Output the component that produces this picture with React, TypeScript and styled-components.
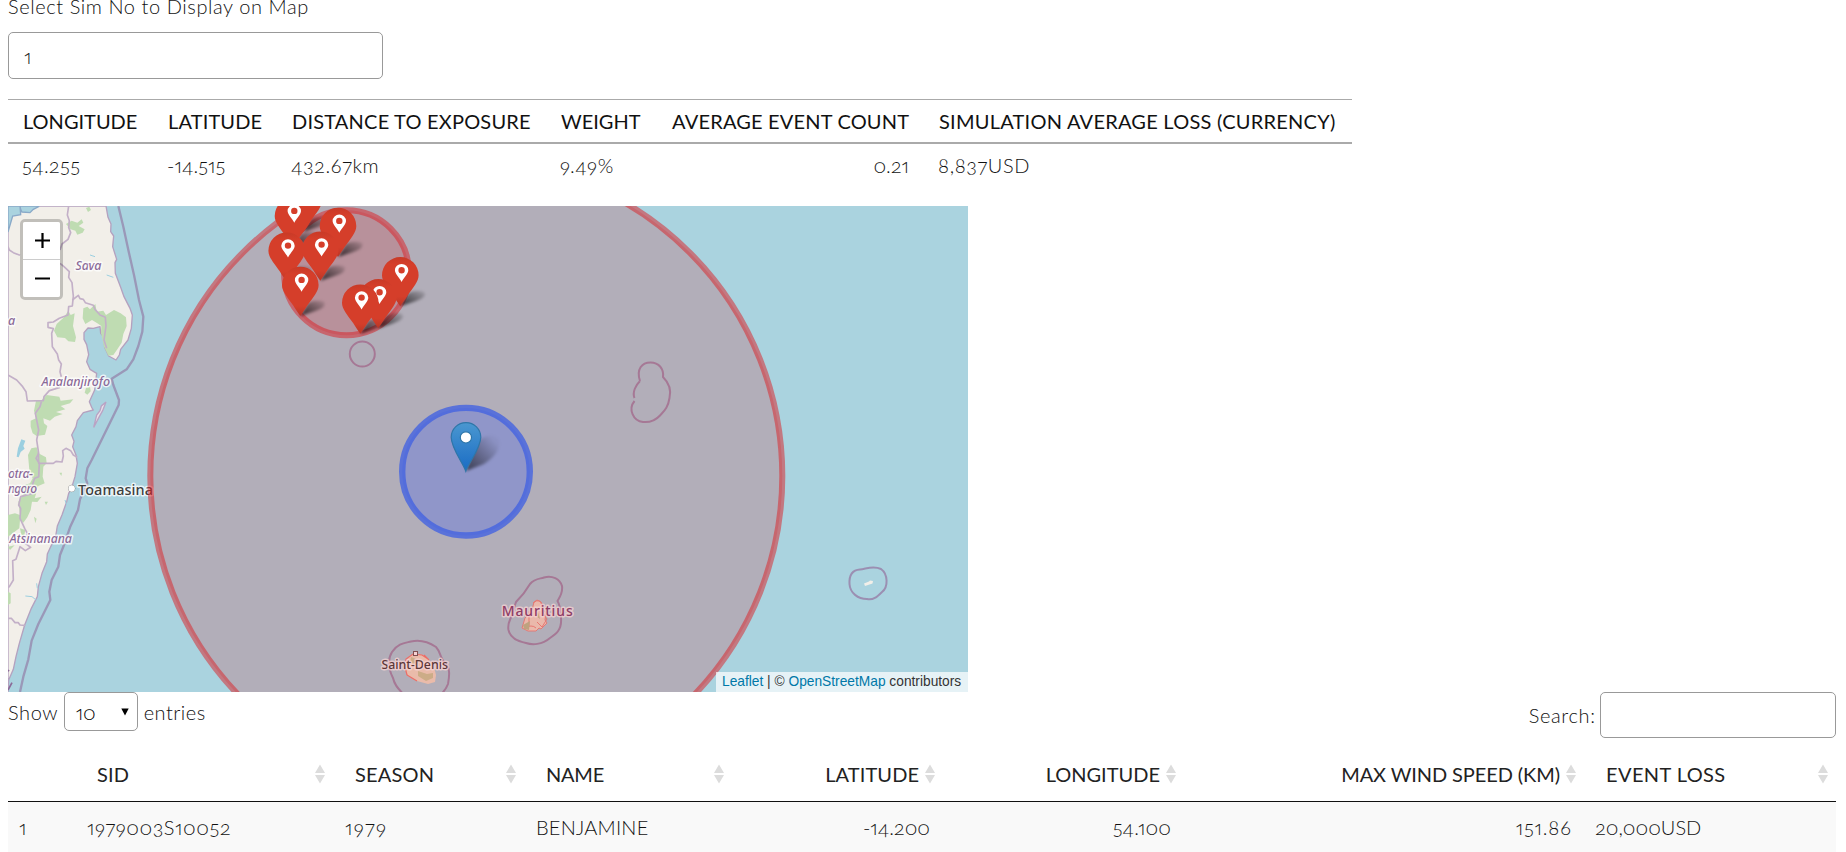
import React from 'react';
import styled, { createGlobalStyle } from 'styled-components';

const GlobalStyle = createGlobalStyle`
  * { box-sizing: border-box; }
  html, body { margin: 0; height: 852px; overflow: hidden; background: #fff; }
  body {
    font-family: Lato, "Open Sans", sans-serif;
    font-size: 20px;
    font-weight: 300;
    line-height: 24px;
    color: #111;
    font-variant-numeric: oldstyle-nums proportional-nums;
  }
`;

const Page = styled.main`
  display: flex;
  flex-direction: column;
  align-items: flex-start;
  width: 1846px;
  height: 852px;
  padding: 0 10px 0 8px;
  overflow: hidden;
  > * { flex: none; }
`;

const Tracked = styled.span<{ $track: number }>`
  letter-spacing: ${p => p.$track}px;
  margin-right: ${p => -p.$track}px;
  white-space: nowrap;
`;

const FieldLabel = styled.label`
  height: 24px;
  margin: -6px 0 14px;
  letter-spacing: 0.58px;
`;

const SimInput = styled.div`
  display: flex;
  align-items: center;
  width: 375px;
  height: 47px;
  padding: 0 15px;
  border: 1px solid #999;
  border-radius: 5px;
`;

const SummaryTable = styled.table`
  width: 1344px;
  margin-top: 20px;
  table-layout: fixed;
  border-collapse: separate;
  border-spacing: 0;
  border-top: 1px solid #aaa;
`;

const Col = styled.col<{ $w: number }>`
  width: ${p => p.$w}px;
`;

const SummaryHead = styled.th<{ $right?: boolean }>`
  height: 44px;
  padding: 0 15px;
  border-bottom: 2px solid #aaa;
  color: #111;
  font-weight: 400;
  text-align: ${p => (p.$right ? 'right' : 'left')};
  white-space: nowrap;
`;

const SummaryCell = styled.td<{ $right?: boolean }>`
  height: 43px;
  padding: 0 15px 1px 14px;
  text-align: ${p => (p.$right ? 'right' : 'left')};
  white-space: nowrap;
`;

const MapFrame = styled.section`
  position: relative;
  width: 960px;
  height: 486px;
  margin-top: 19px;
  overflow: hidden;
  background: #aad3df;
`;

const MapCanvas = styled.svg`
  display: block;
`;

const ZoomControl = styled.div`
  position: absolute;
  top: 13px;
  left: 12px;
  width: 43px;
  border: 3px solid rgba(0, 0, 0, 0.2);
  border-radius: 5px;
  background-clip: padding-box;
`;

const ZoomButton = styled.button`
  display: flex;
  align-items: center;
  justify-content: center;
  width: 37px;
  height: 37px;
  padding: 0 0 0 2px;
  border: 0;
  background: #fff;
  &:first-child { height: 38px; border-bottom: 1px solid #ccc; border-radius: 2px 2px 0 0; }
  &:last-child { border-radius: 0 0 2px 2px; }
`;

const Attribution = styled.div`
  position: absolute;
  right: 0;
  bottom: 0;
  width: 252px;
  height: 20px;
  padding-left: 6px;
  background: rgba(255, 255, 255, 0.7);
  color: #333;
  font: 13.75px/19px "Liberation Sans", Arial, sans-serif;
  white-space: nowrap;
`;

const MapLink = styled.a`
  color: #0078a8;
`;

const Controls = styled.div`
  display: flex;
  justify-content: space-between;
  align-items: flex-start;
  width: 1828px;
  height: 57px;
`;

const LengthControl = styled.div`
  display: flex;
  align-items: center;
  height: 39px;
  gap: 6px;
`;

const LengthSelect = styled.div`
  display: flex;
  align-items: center;
  justify-content: space-between;
  width: 74px;
  height: 39px;
  padding: 0 8px 0 11px;
  border: 1px solid #999;
  border-radius: 5px;
  color: #000;
`;

const SearchControl = styled.div`
  display: flex;
  align-items: center;
  height: 46px;
  gap: 5px;
`;

const SearchInput = styled.input`
  width: 236px;
  height: 46px;
  border: 1px solid #999;
  border-radius: 5px;
`;

const EventTable = styled.table`
  width: 1828px;
  table-layout: fixed;
  border-collapse: separate;
  border-spacing: 0;
`;

const EventHead = styled.th`
  height: 53px;
  padding: 0 10px 3px 20px;
  border-bottom: 1px solid #111;
  color: #222;
  font-weight: 400;
  &:last-child { padding-left: 25px; padding-right: 8px; }
`;

const HeadContent = styled.div<{ $right?: boolean }>`
  display: flex;
  align-items: center;
  justify-content: ${p => (p.$right ? 'flex-end' : 'space-between')};
  gap: 6px;
  margin-right: ${p => (p.$right ? -5 : 0)}px;
`;

const EventCell = styled.td<{ $right?: boolean }>`
  height: 54px;
  padding: 0 10px 4px;
  background: #f9f9f9;
  text-align: ${p => (p.$right ? 'right' : 'left')};
  white-space: nowrap;
  &:first-child { padding-left: 11px; }
  &:last-child { padding-left: 14px; }
`;

const summary = [
  { w: 145, head: 'LONGITUDE', ht: 0, cell: '54.255', ct: 0.3 },
  { w: 124, head: 'LATITUDE', ht: 0.15, cell: '-14.515', ct: 0.1 },
  { w: 269, head: 'DISTANCE TO EXPOSURE', ht: 0.2, cell: '432.67km', ct: 0.6 },
  { w: 110, head: 'WEIGHT', ht: 0, cell: '9.49%', ct: 0.6 },
  { w: 268, head: 'AVERAGE EVENT COUNT', ht: 0.18, cell: '0.21', ct: 0, right: true },
  { w: 428, head: 'SIMULATION AVERAGE LOSS (CURRENCY)', ht: 0.24, cell: '8,837USD', ct: 0.65 },
];

const events = [
  { w: 258, head: 'SID', ht: 0.2, cell: '1979003S10052', ct: 0.55 },
  { w: 191, head: 'SEASON', ht: 0.18, cell: '1979', ct: 1.3 },
  { w: 208, head: 'NAME', ht: -0.25, cell: 'BENJAMINE', ct: 0.2 },
  { w: 206, head: 'LATITUDE', ht: 0.1, cell: '-14.200', ct: 0, right: true },
  { w: 241, head: 'LONGITUDE', ht: 0, cell: '54.100', ct: 0.1, right: true },
  { w: 400, head: 'MAX WIND SPEED (KM)', ht: -0.1, cell: '151.86', ct: 0.9, right: true },
  { w: 255, head: 'EVENT LOSS', ht: 0.4, cell: '20,000USD', ct: 0 },
];

const SortIcon = () => (
  <svg width="10" height="20" viewBox="0 0 10 20" fill="#dcdcdc">
    <path d="M5 0.5 L10 9 H0 Z M0 11 H10 L5 19.5 Z" />
  </svg>
);

const pins = [
  [303.5, 231.7], [293, 247], [338, 257], [286.7, 281.7], [320.3, 280.7],
  [300.3, 316], [400.3, 306.3], [378.3, 328.3], [360.3, 333.7],
];

const RedPin = ({ x, y }: { x: number; y: number }) => (
  <g transform={`translate(${x} ${y})`}>
    <path d="M0 0 C-2 -3 -4.5 -6.5 -7 -10.5 C-13 -19 -18.3 -24.5 -18.3 -31 A18.3 18.3 0 0 1 18.3 -31 C18.3 -24.5 13 -19 7 -10.5 C4.5 -6.5 2 -3 0 0Z" fill="url(#pinRed)" />
    <path fillRule="evenodd" d="M1.3 -24.3 C-0.5 -28 -5.4 -32.5 -5.4 -36 A6.7 6.4 0 0 1 8 -36 C8 -32.5 3.1 -28 1.3 -24.3Z M1.3 -39.3 A3.2 3.2 0 1 0 1.3 -32.9 A3.2 3.2 0 1 0 1.3 -39.3Z" fill="#fff" />
  </g>
);

const ParkAreas = () => (
  <g fill="#bfdcb2">
    <path d="M198 72 L215 62 L232 68 L245 58 L250 68 L236 78 L254 88 L248 98 L232 104 L226 92 L212 88 Z M258 24 L268 20 L273 30 L264 36Z" />
    <path d="M205 332 L212 345 L224 340 L219 378 L228 412 L225 426 L205 424 L195 414 L172 412 L162 392 L170 372 L192 352 Z" />
    <path d="M250 325 L262 320 L270 328 L286 312 L290 335 L310 332 L318 345 L342 330 L362 340 L378 352 L380 378 L370 402 L365 428 L352 448 L340 465 L325 467 L312 440 L303 398 L304 378 L292 370 L276 360 L256 372 L248 355Z" />
    <path d="M108 602 L125 600 L140 585 L178 590 L182 602 L220 598 L210 610 L182 618 L196 628 L168 636 L188 642 L164 650 L150 662 L130 655 L132 670 L142 678 L135 704 L110 708 L98 700 L92 680 L92 662 L108 655 L102 632Z" />
    <path d="M258 564 L270 560 L272 574 L262 584 L254 578Z" />
    <path d="M94 745 L110 742 L115 760 L138 772 L140 790 L130 800 L128 830 L134 850 L115 858 L110 875 L104 895 L125 890 L112 906 L96 905 L92 930 L82 952 L70 968 L60 960 L58 985 L38 1000 L24 1010 L24 945 L45 940 L60 945 L55 905 L72 880 L60 860 L90 850 L98 835 L88 810 L84 765Z" />
    <path d="M102 950 L110 956 L106 970Z M134 905 L144 905 L138 915Z M178 818 L186 818 L184 828Z M60 985 L76 990 L72 1010 L64 1005Z M24 1175 L32 1180 L32 1210 L24 1215Z M24 1040 L44 1036 L30 1050Z" />
  </g>
);

const AdminBorders = () => (
  <g fill="none" stroke="#c3b0c8" strokeWidth="5" strokeLinejoin="round">
    <path d="M206 18 L202 45 L208 62 L206 82 L212 98 L204 118 L186 132 L180 150" />
    <path d="M24 140 L28 150 L40 158 L60 166 M180 190 L192 200 L208 215 L206 232 L216 248 L218 270 L220 288 L217 318 L206 320 L204 345 L178 355 L160 366 L144 368 L144 382 L160 386 L155 400 L157 440 L172 462 L176 480 L184 492 L180 515 L184 530" />
    <path d="M217 300 L235 286 L240 296 L250 298 L256 308 L280 316 L285 328 L300 345 L316 352 L318 378 L312 420 L320 445" />
    <path d="M24 525 L50 540 L68 560 L78 575 L82 603 L130 602 L132 590 L148 572 L180 562 M125 602 L120 620 L106 640 L116 690 L110 720 L116 760 L108 775 L118 790" />
    <path d="M115 760 L116 790 L160 790 L168 784 L186 786 L190 768 L188 752 L198 745 L212 752 L220 765 L232 772" />
    <path d="M118 790 L116 830 L104 835 L96 858 L98 880 L62 890 L56 915 L62 925 L60 955 L74 985 L82 1000 L76 1030 L92 1042 L76 1052 L60 1040 L48 1078 L38 1082 L40 1140 L28 1160 L24 1162 M24 1255 L34 1255 L45 1268 L55 1268 L60 1275 L76 1276" />
  </g>
);

const Mainland = () => (
  <g transform="translate(0 200) scale(0.33333)">
    <path
      d="M24 18 L318 18 L324 52 L333 72 L332 95 L341 108 L338 140 L350 178 L345 188 L346 220 L362 262 L372 290 L390 325 L397 345 L394 385 L384 420 L362 448 L358 465 L348 480 L326 468 L314 442 L312 412 L302 400 L300 380 L280 385 L264 384 L252 398 L252 418 L260 434 L266 464 L260 485 L270 508 L290 520 L284 570 L268 605 L275 622 L280 630 L250 638 L232 662 L228 680 L215 705 L222 724 L218 740 L228 765 L232 790 L225 830 L214 866 L206 880 L200 905 L186 945 L172 978 L166 1015 L152 1040 L142 1062 L140 1085 L126 1120 L115 1160 L112 1190 L94 1225 L74 1275 L58 1330 L48 1370 L40 1408 L26 1440 L24 1476 Z"
      fill="#f2efe9" stroke="#b4a1bf" strokeWidth="4" strokeLinejoin="round"
    />
    <ParkAreas />
    <AdminBorders />
    <path d="M24 18 L60 18 L62 28 L66 36 L90 38 L100 28 L116 20 L116 18 L60 18 L62 44 L38 48 L24 96 Z" fill="#aad3df" stroke="#8aa9c8" strokeWidth="4" />
    <path d="M64 718 L76 722 L70 738 L74 746 L62 756 L56 772 L50 770 L54 745Z" fill="#9bcfe0" />
    <path d="M318 606 L308 632 L298 650 L281 682 L290 645 L300 632 L304 618Z" fill="#e8e0e8" stroke="#b9a3c4" strokeWidth="4" />
    <path d="M110 1150 L112 1165 M76 1188 L96 1190 L108 1200 M195 900 L200 915 M320 225 L340 232 M270 165 L285 170" stroke="#9bcfe0" strokeWidth="3" fill="none" />
    <path
      d="M355 18 L370 80 L385 150 L402 225 L417 300 L430 350 L427 395 L415 438 L400 478 L380 508 L335 536 L340 555 L357 600 L356 615 L275 780 L262 805 L257 835 L262 850 L250 875 L240 898 L234 930 L210 982 L192 1035 L180 1065 L175 1100 L155 1140 L148 1175 L151 1200 L115 1272 L95 1322 L85 1378 L70 1430 L60 1476"
      fill="none" stroke="#9a98b8" strokeWidth="7" strokeLinejoin="round"
    />
    <path d="M24 1470 L36 1448 M24 1410 L27 1414" stroke="#8b6a98" strokeWidth="5" />
  </g>
);

const Islands = () => (
  <g fill="none" stroke="#9b8fb2" strokeWidth="2" strokeLinejoin="round">
    <circle cx="362.3" cy="354" r="12.5" />
    <path d="M640 381 C636 369 642 362.5 650.5 362.5 C659 362.5 664 369 663 377 C671 385 671 392 669.5 398 C668 408 664 411 660 415.5 C655 421 648 422.5 643 422 C633 421 628 409 634.5 401 M634.5 398 C632 392 636 385 640 381" />
    <path d="M860 569.5 C866 569 873 565 881 569 C888 574 888.5 587 882 592 C877 597 873 600.5 867 599 C858 599 850 593 849.5 584 C849 575 853 570 860 569.5Z" />
    <path d="M864 583.5 L869 581.5 L870 580.5 L873 581 L872.5 583.5 L868 585 L865 586Z" fill="#f2efe9" stroke="none" />
    <path d="M516 602 C522 596 526 591 530 584 C535 578 540 579 544 577.5 C552 575 560 579 562 586 C563 593 560 597 557.5 601 C561 607 560 612 561 618 C562 630 556 634 550 638 C542 645 532 645 526 643 C516 641 510 637 508.5 630 C507 622 511 620 512 614 C514 608 515 605 516 602Z" />
    <path d="M392 652 C398 643 405 643 411 641.5 C422 639 430 643 436 647 C441 652 440 659 445 663 C451 668 449 678 448 684 C445 692 442 693 438 697 L406 697 C400 690 395 687 393 678 C388 668 387 660 392 652Z" />
  </g>
);

const IslandLand = () => (
  <g>
    <path d="M537 600 L541 602 L542 608 L546 613 L545 620 L547 623 L541 629 L539 628 L536 631 L528 631 L522 628 L525 618 L532 610 L534 602Z" fill="#f0dfce" stroke="#e7908a" strokeWidth="1" />
    <path d="M533 603 Q540 597 543 606 Q542 614 547 619 L542 627 L537 622 M529 611 L529 626 M524 628 Q532 624 536 628" fill="none" stroke="#ee8e85" strokeWidth="1" />
    <path d="M523 625 L530 621 L529 630 L524 629Z M535 615 L538 612 L540 619Z" fill="#b9c497" />
    <path d="M413 654 L424 655 L429 660 L434 667 L436 675 L435 682 L428 684 L417 681 L408 676 L405 669 L406 660Z" fill="#f0e3cc" />
    <path d="M411 657 L419 660 L417 665 L410 663Z M418 671 L427 674 L433 673 L433 678 L426 681 L418 676Z" fill="#cbd0a0" />
    <path d="M424 655 L429 660 M407 675 L405 667 L406 659 L413 654 L422 655 L428 659 M407 675 L417 681" fill="none" stroke="#f58078" strokeWidth="1.2" />
    <rect x="413.5" y="651.5" width="4" height="4" fill="#fff" stroke="#6d5c5c" />
  </g>
);

const MapLabels = () => (
  <g fontFamily='"Noto Sans", "Open Sans", sans-serif' stroke="rgba(255,255,255,.75)" strokeWidth="3" strokeLinejoin="round" paintOrder="stroke">
    <g fontSize="12.5" fontStyle="italic" fontWeight="500" fill="#8b6a98">
      <text x="75.5" y="270" textLength="26">Sava</text>
      <text x="41.5" y="386" textLength="68.5">Analanjirofo</text>
      <text x="8" y="325">a</text>
      <text x="8" y="478" textLength="25">otra-</text>
      <text x="8" y="493" fontSize="12" textLength="29">ngoro</text>
      <text x="9.5" y="543" textLength="62.5">Atsinanana</text>
    </g>
    <g fill="#3f3f3f">
      <circle cx="71.7" cy="488.5" r="3.2" fill="#fff" stroke="#777" strokeWidth="1" />
      <text x="78" y="494.5" fontSize="14.5" fontWeight="500" textLength="75">Toamasina</text>
      <text x="381.5" y="668.5" fontSize="12.5" fontWeight="500" textLength="66.5">Saint-Denis</text>
    </g>
    <text x="501.7" y="616" fontSize="14" fontWeight="500" textLength="71" fill="#7d4576">Mauritius</text>
  </g>
);

const TerritoryMap = () => (
  <MapCanvas width="960" height="486" viewBox="8 206 960 486">
    <defs>
      <linearGradient id="pinRed" x1="0" y1="0" x2="0" y2="1">
        <stop offset="0" stopColor="#c83a27" />
        <stop offset="0.15" stopColor="#d53e2a" />
        <stop offset="0.8" stopColor="#d53e2a" />
        <stop offset="1" stopColor="#b83626" />
      </linearGradient>
      <linearGradient id="pinBlue" x1="0" y1="0" x2="0" y2="1">
        <stop offset="0" stopColor="#4a97d0" />
        <stop offset="1" stopColor="#1a6cc4" />
      </linearGradient>
      <filter id="soft" x="-40%" y="-40%" width="180%" height="180%">
        <feGaussianBlur stdDeviation="1.8" />
      </filter>
      <linearGradient id="fade" x1="0" y1="1" x2="1" y2="0">
        <stop offset="0" stopColor="#000" stopOpacity="0.75" />
        <stop offset="1" stopColor="#000" stopOpacity="0.08" />
      </linearGradient>
      <linearGradient id="fadeLight" x1="0" y1="1" x2="1" y2="0">
        <stop offset="0" stopColor="#000" stopOpacity="0.6" />
        <stop offset="0.85" stopColor="#000" stopOpacity="0.03" />
      </linearGradient>
    </defs>
    <Mainland />
    <Islands />
    <IslandLand />
    <MapLabels />
    <g fill="#d21f21" fillOpacity="0.2" stroke="#dc1e23" strokeOpacity="0.5" strokeWidth="6">
      <circle cx="466.3" cy="476" r="316" />
      <circle cx="346.5" cy="272.8" r="62.5" />
    </g>
    <circle cx="466" cy="471.7" r="63.8" fill="#415fee" fillOpacity="0.3" stroke="#4162e1" strokeOpacity="0.78" strokeWidth="6.4" />
    <path d="M466 471 L476 442 Q492 430 499 440 Q502 452 484 464Z" fill="url(#fadeLight)" filter="url(#soft)" />
    <path d="M465.8 471.2 C463 463 451.2 448 451.2 437.2 A14.8 14.6 0 0 1 480.8 437.2 C480.8 448 468.6 463 465.8 471.2Z" fill="url(#pinBlue)" stroke="#2f76a8" strokeWidth="1.2" />
    <circle cx="465.9" cy="437.4" r="5.6" fill="#fff" stroke="#2d75a8" strokeWidth="1.2" />
    {pins.map(([x, y]) => (
      <path key={`shadow-${x}`} transform={`translate(${x} ${y})`} d="M0 0 L8 -13 Q16 -17 24 -14 Q27 -9 15 -5 Z" fill="url(#fade)" filter="url(#soft)" />
    ))}
    {pins.map(([x, y]) => <RedPin key={x} x={x} y={y} />)}
  </MapCanvas>
);

export default function App() {
  return (
    <Page>
      <GlobalStyle />
      <FieldLabel>Select Sim No to Display on Map</FieldLabel>
      <SimInput>1</SimInput>

      <SummaryTable>
        <colgroup>{summary.map(c => <Col key={c.head} $w={c.w} />)}</colgroup>
        <thead>
          <tr>{summary.map(c => <SummaryHead key={c.head} $right={c.right}><Tracked $track={c.ht}>{c.head}</Tracked></SummaryHead>)}</tr>
        </thead>
        <tbody>
          <tr>{summary.map(c => <SummaryCell key={c.head} $right={c.right}><Tracked $track={c.ct}>{c.cell}</Tracked></SummaryCell>)}</tr>
        </tbody>
      </SummaryTable>

      <MapFrame>
        <TerritoryMap />
        <ZoomControl>
          <ZoomButton aria-label="Zoom in">
            <svg width="15" height="15" viewBox="0 0 15 15" stroke="#000" strokeWidth="2.2"><path d="M0 7.5H15M7.5 0V15" /></svg>
          </ZoomButton>
          <ZoomButton aria-label="Zoom out">
            <svg width="15" height="15" viewBox="0 0 15 15" stroke="#000" strokeWidth="2"><path d="M0 7.5H15" /></svg>
          </ZoomButton>
        </ZoomControl>
        <Attribution>
          <MapLink>Leaflet</MapLink> | © <MapLink>OpenStreetMap</MapLink> contributors
        </Attribution>
      </MapFrame>

      <Controls>
        <LengthControl>
          <Tracked $track={0.6}>Show</Tracked>
          <LengthSelect>
            10
            <svg width="8" height="8" viewBox="0 0 8 8"><path d="M0.3 0.5H7.7L4 7.5Z" /></svg>
          </LengthSelect>
          <Tracked $track={0.5}>entries</Tracked>
        </LengthControl>
        <SearchControl>
          <Tracked $track={0.65}>Search:</Tracked>
          <SearchInput />
        </SearchControl>
      </Controls>

      <EventTable>
        <colgroup>
          <Col $w={69} />
          {events.map(c => <Col key={c.head} $w={c.w} />)}
        </colgroup>
        <thead>
          <tr>
            <EventHead />
            {events.map(c => (
              <EventHead key={c.head}>
                <HeadContent $right={c.right}>
                  <Tracked $track={c.ht}>{c.head}</Tracked>
                  <SortIcon />
                </HeadContent>
              </EventHead>
            ))}
          </tr>
        </thead>
        <tbody>
          <tr>
            <EventCell>1</EventCell>
            {events.map(c => <EventCell key={c.head} $right={c.right}><Tracked $track={c.ct}>{c.cell}</Tracked></EventCell>)}
          </tr>
        </tbody>
      </EventTable>
    </Page>
  );
}
